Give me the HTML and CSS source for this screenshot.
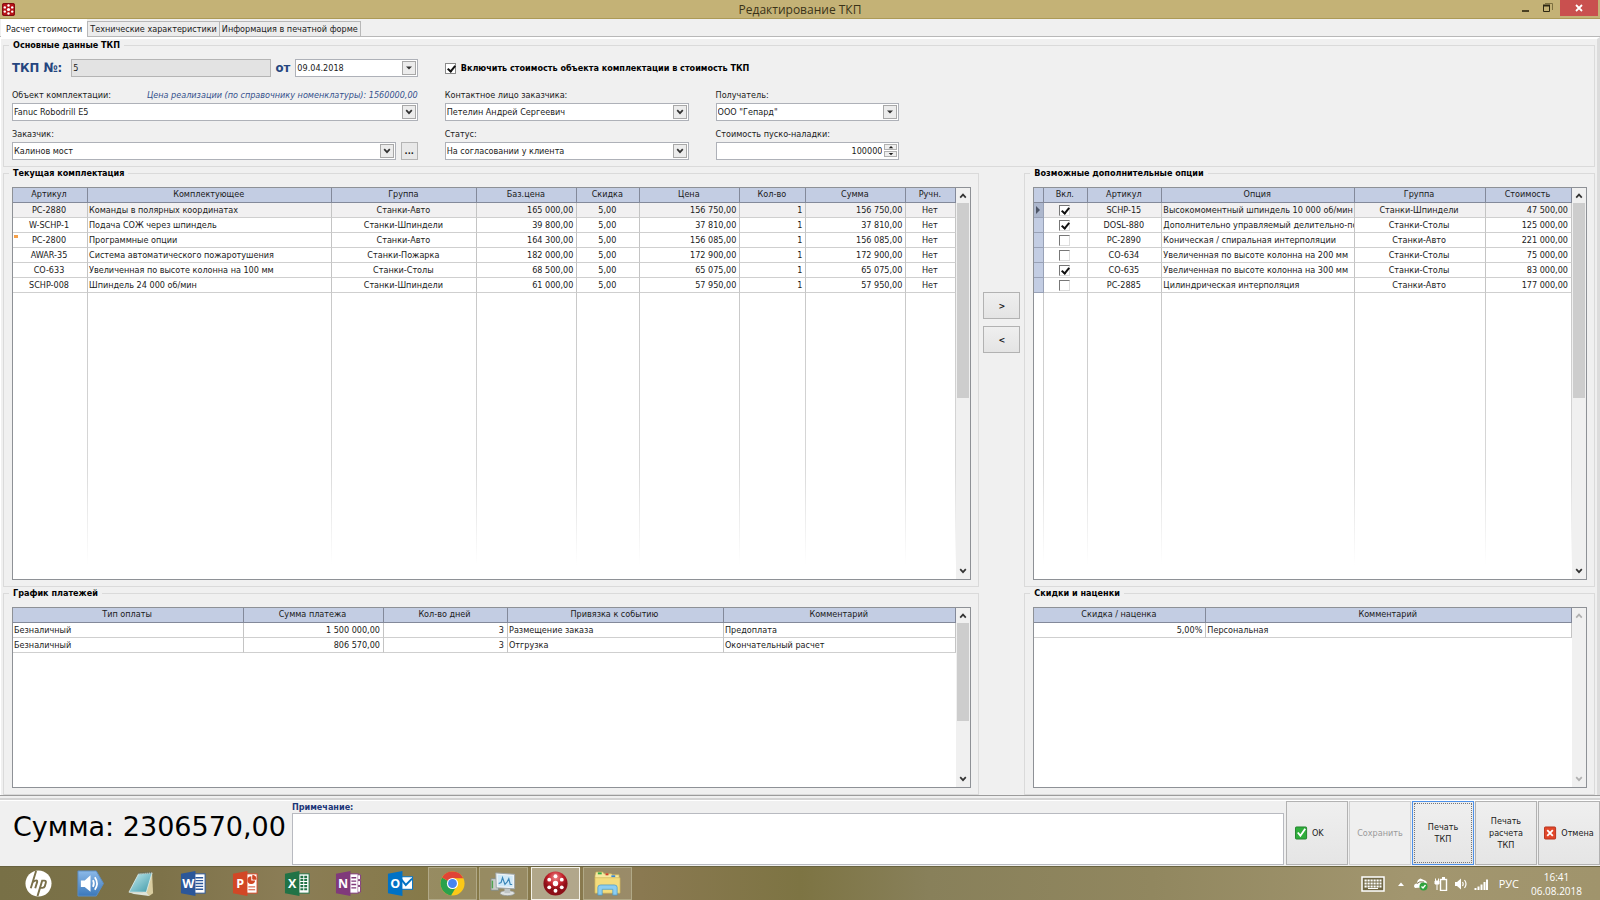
FILE: index.html
```html
<!DOCTYPE html>
<html lang="ru">
<head>
<meta charset="utf-8">
<title>Редактирование ТКП</title>
<link rel="stylesheet" href="styles.css">
</head>
<body>
<svg class="defs" aria-hidden="true">
  <symbol id="chev-down" viewBox="0 0 8 8"><path d="M1.2 2.2 4 5.2 6.800 2.200" fill="none" stroke="currentColor" stroke-width="1.700"/></symbol>
  <symbol id="chev-up" viewBox="0 0 8 8"><path d="M1.200 5.600 4 2.600 6.800 5.600" fill="none" stroke="currentColor" stroke-width="1.700"/></symbol>
  <symbol id="tri-down" viewBox="0 0 8 8"><path d="M1 2.500H7L4 5.500Z" fill="currentColor"/></symbol>
  <symbol id="tri-up" viewBox="0 0 8 8"><path d="M1 5.500H7L4 2.500Z" fill="currentColor"/></symbol>
</svg>

<header class="titlebar">
  <svg class="app-icon" viewBox="0 0 13 13"><rect width="13" height="13" rx="2" fill="#b81419"/><rect x=".5" y=".5" width="12" height="12" rx="2" fill="none" stroke="#7c0c10"/><g fill="#fff"><circle cx="6.500" cy="6.500" r="1.600"/><circle cx="6.500" cy="2.500" r="1.200"/><circle cx="6.500" cy="10.500" r="1.200"/><circle cx="2.800" cy="4.400" r="1.200"/><circle cx="10.200" cy="4.400" r="1.200"/><circle cx="2.800" cy="8.600" r="1.200"/><circle cx="10.200" cy="8.600" r="1.200"/></g></svg>
  <h1 class="window-title">Редактирование ТКП</h1>
  <div class="window-buttons">
    <button class="wbtn" aria-label="Свернуть"><svg width="8" height="10" viewBox="0 0 8 10"><path d="M0 8H7" stroke="#4a4022" stroke-width="2"/></svg></button>
    <button class="wbtn" aria-label="Развернуть"><svg width="10" height="10" viewBox="0 0 10 10"><path d="M2 .500H9.500V7" fill="none" stroke="#7d7040"/><path d="M.500 2.500H6.500V8.500H.500Z" fill="none" stroke="#2e2814"/><path d="M0 2.500H7" stroke="#2e2814" stroke-width="2"/></svg></button>
    <button class="wbtn wbtn-close" aria-label="Закрыть"><svg width="8" height="8" viewBox="0 0 8 8"><path d="M1 1 7 7M7 1 1 7" stroke="#fff" stroke-width="1.800"/></svg></button>
  </div>
</header>

<nav class="tabs" role="tablist">
  <button class="tab tab-active" role="tab" aria-selected="true">Расчет стоимости</button>
  <button class="tab" role="tab">Технические характеристики</button>
  <button class="tab" role="tab">Информация в печатной форме</button>
</nav>

<main class="page">
  <fieldset class="group">
    <legend>Основные данные ТКП</legend>
    <div class="form">
      <div class="doc-line">
        <label class="big-label" for="num">ТКП №:</label>
        <input class="field readonly" id="num" type="text" value="5" readonly>
        <label class="big-label" for="date">от</label>
        <div class="combo date">
          <input class="field" id="date" type="text" value="09.04.2018">
          <button class="drop" aria-label="Календарь"><svg><use href="#tri-down"/></svg></button>
        </div>
      </div>
      <div class="include">
        <input class="check" id="inc" type="checkbox" checked>
        <label for="inc">Включить стоимость объекта комплектации в стоимость ТКП</label>
      </div>
      <div class="cell start">
        <div class="label-line"><label for="obj">Объект комплектации:</label><span class="hint">Цена реализации (по справочнику номенклатуры): 1560000,00</span></div>
        <div class="combo"><select class="field" id="obj"><option>Fanuc Robodrill E5</option></select><span class="drop"><svg><use href="#chev-down"/></svg></span></div>
      </div>
      <div class="cell">
        <label for="contact">Контактное лицо заказчика:</label>
        <div class="combo"><select class="field" id="contact"><option>Петелин Андрей Сергеевич</option></select><span class="drop"><svg><use href="#chev-down"/></svg></span></div>
      </div>
      <div class="cell">
        <label for="rcpt">Получатель:</label>
        <div class="combo"><select class="field" id="rcpt"><option>ООО "Гепард"</option></select><span class="drop"><svg><use href="#tri-down"/></svg></span></div>
      </div>
      <div class="cell start">
        <label for="cust">Заказчик:</label>
        <div class="with-button">
          <div class="combo"><select class="field" id="cust"><option>Калинов мост</option></select><span class="drop"><svg><use href="#chev-down"/></svg></span></div>
          <button class="more">...</button>
        </div>
      </div>
      <div class="cell">
        <label for="status">Статус:</label>
        <div class="combo"><select class="field" id="status"><option>На согласовании у клиента</option></select><span class="drop"><svg><use href="#chev-down"/></svg></span></div>
      </div>
      <div class="cell">
        <label for="cost">Стоимость пуско-наладки:</label>
        <div class="combo">
          <input class="field numeric" id="cost" type="text" value="100000">
          <span class="spin"><button aria-label="Больше"><svg><use href="#tri-up"/></svg></button><button aria-label="Меньше"><svg><use href="#tri-down"/></svg></button></span>
        </div>
      </div>
    </div>
  </fieldset>

  <div class="row row-main">
    <fieldset class="group">
      <legend>Текущая комплектация</legend>
      <div class="grid">
        <table class="table lined">
          <colgroup><col class="w75"><col><col class="w145"><col class="w100"><col class="w63"><col class="w100"><col class="w66"><col class="w100"><col class="w50"></colgroup>
          <thead><tr><th>Артикул</th><th>Комплектующее</th><th>Группа</th><th>Баз.цена</th><th>Скидка</th><th>Цена</th><th>Кол-во</th><th>Сумма</th><th>Ручн.</th></tr></thead>
          <tbody>
            <tr class="current"><td class="c">PC-2880</td><td>Команды в полярных координатах</td><td class="c">Станки-Авто</td><td class="r">165 000,00</td><td class="c">5,00</td><td class="r">156 750,00</td><td class="r">1</td><td class="r">156 750,00</td><td class="c">Нет</td></tr>
            <tr><td class="c">W-SCHP-1</td><td>Подача СОЖ через шпиндель</td><td class="c">Станки-Шпиндели</td><td class="r">39 800,00</td><td class="c">5,00</td><td class="r">37 810,00</td><td class="r">1</td><td class="r">37 810,00</td><td class="c">Нет</td></tr>
            <tr><td class="c marked">PC-2800</td><td>Программные опции</td><td class="c">Станки-Авто</td><td class="r">164 300,00</td><td class="c">5,00</td><td class="r">156 085,00</td><td class="r">1</td><td class="r">156 085,00</td><td class="c">Нет</td></tr>
            <tr><td class="c">AWAR-35</td><td>Система автоматического пожаротушения</td><td class="c">Станки-Пожарка</td><td class="r">182 000,00</td><td class="c">5,00</td><td class="r">172 900,00</td><td class="r">1</td><td class="r">172 900,00</td><td class="c">Нет</td></tr>
            <tr><td class="c">CO-633</td><td>Увеличенная по высоте колонна на 100 мм</td><td class="c">Станки-Столы</td><td class="r">68 500,00</td><td class="c">5,00</td><td class="r">65 075,00</td><td class="r">1</td><td class="r">65 075,00</td><td class="c">Нет</td></tr>
            <tr><td class="c">SCHP-008</td><td>Шпиндель 24 000 об/мин</td><td class="c">Станки-Шпиндели</td><td class="r">61 000,00</td><td class="c">5,00</td><td class="r">57 950,00</td><td class="r">1</td><td class="r">57 950,00</td><td class="c">Нет</td></tr>
            <tr class="filler"><td></td><td></td><td></td><td></td><td></td><td></td><td></td><td></td><td></td></tr>
          </tbody>
        </table>
        <div class="scroll"><svg><use href="#chev-up"/></svg><div class="track"><div class="thumb"></div></div><svg><use href="#chev-down"/></svg></div>
      </div>
    </fieldset>
    <div class="movers"><button>&gt;</button><button>&lt;</button></div>
    <fieldset class="group">
      <legend>Возможные дополнительные опции</legend>
      <div class="grid">
        <table class="table lined">
          <colgroup><col class="w10"><col class="w44"><col class="w74"><col><col class="w131"><col class="w86"></colgroup>
          <thead><tr><th></th><th>Вкл.</th><th>Артикул</th><th>Опция</th><th>Группа</th><th>Стоимость</th></tr></thead>
          <tbody>
            <tr class="current"><td class="ind"><svg viewBox="0 0 6 8"><path d="M1 0 5 4 1 8Z" fill="#4d5566"/></svg></td><td class="c"><input class="check sunk" type="checkbox" checked aria-label="SCHP-15"></td><td class="c">SCHP-15</td><td>Высокомоментный шпиндель 10 000 об/мин</td><td class="c">Станки-Шпиндели</td><td class="r">47 500,00</td></tr>
            <tr><td class="ind"></td><td class="c"><input class="check sunk" type="checkbox" checked aria-label="DOSL-880"></td><td class="c">DOSL-880</td><td>Дополнительно управляемый делительно-поворотный стол</td><td class="c">Станки-Столы</td><td class="r">125 000,00</td></tr>
            <tr><td class="ind"></td><td class="c"><input class="check sunk" type="checkbox" aria-label="PC-2890"></td><td class="c">PC-2890</td><td>Коническая / спиральная интерполяции</td><td class="c">Станки-Авто</td><td class="r">221 000,00</td></tr>
            <tr><td class="ind"></td><td class="c"><input class="check sunk" type="checkbox" aria-label="CO-634"></td><td class="c">CO-634</td><td>Увеличенная по высоте колонна на 200 мм</td><td class="c">Станки-Столы</td><td class="r">75 000,00</td></tr>
            <tr><td class="ind"></td><td class="c"><input class="check sunk" type="checkbox" checked aria-label="CO-635"></td><td class="c">CO-635</td><td>Увеличенная по высоте колонна на 300 мм</td><td class="c">Станки-Столы</td><td class="r">83 000,00</td></tr>
            <tr><td class="ind"></td><td class="c"><input class="check sunk" type="checkbox" aria-label="PC-2885"></td><td class="c">PC-2885</td><td>Цилиндрическая интерполяция</td><td class="c">Станки-Авто</td><td class="r">177 000,00</td></tr>
            <tr class="filler"><td></td><td></td><td></td><td></td><td></td><td></td></tr>
          </tbody>
        </table>
        <div class="scroll"><svg><use href="#chev-up"/></svg><div class="track"><div class="thumb"></div></div><svg><use href="#chev-down"/></svg></div>
      </div>
    </fieldset>
  </div>

  <div class="row row-bottom">
    <fieldset class="group">
      <legend>График платежей</legend>
      <div class="grid">
        <table class="table">
          <colgroup><col class="w231"><col class="w140"><col class="w124"><col class="w216"><col></colgroup>
          <thead><tr><th>Тип оплаты</th><th>Сумма платежа</th><th>Кол-во дней</th><th>Привязка к событию</th><th>Комментарий</th></tr></thead>
          <tbody>
            <tr><td>Безналичный</td><td class="r">1 500 000,00</td><td class="r">3</td><td>Размещение заказа</td><td>Предоплата</td></tr>
            <tr><td>Безналичный</td><td class="r">806 570,00</td><td class="r">3</td><td>Отгрузка</td><td>Окончательный расчет</td></tr>
            <tr class="filler"><td colspan="5"></td></tr>
          </tbody>
        </table>
        <div class="scroll"><svg><use href="#chev-up"/></svg><div class="track"><div class="thumb thumb-long"></div></div><svg><use href="#chev-down"/></svg></div>
      </div>
    </fieldset>
    <div class="movers"></div>
    <fieldset class="group">
      <legend>Скидки и наценки</legend>
      <div class="grid">
        <table class="table">
          <colgroup><col class="w172"><col></colgroup>
          <thead><tr><th>Скидка / наценка</th><th>Комментарий</th></tr></thead>
          <tbody>
            <tr><td class="r">5,00%</td><td>Персональная</td></tr>
            <tr class="filler"><td colspan="2"></td></tr>
          </tbody>
        </table>
        <div class="scroll scroll-off"><svg><use href="#chev-up"/></svg><div class="track"></div><svg><use href="#chev-down"/></svg></div>
      </div>
    </fieldset>
  </div>
</main>

<section class="bottom">
  <div class="total">Сумма: 2306570,00</div>
  <div class="note">
    <label for="note">Примечание:</label>
    <textarea id="note"></textarea>
  </div>
  <div class="actions">
    <button class="action"><svg viewBox="0 0 14 14"><rect x=".5" y=".5" width="12" height="13" rx="1" fill="#2fae3c" stroke="#1f7f2a"/><path d="M3 6.500 5.800 10 11 2.500" fill="none" stroke="#fff" stroke-width="2"/></svg>OK</button>
    <button class="action" disabled>Сохранить</button>
    <button class="action focused">Печать<br>ТКП</button>
    <button class="action">Печать<br>расчета<br>ТКП</button>
    <button class="action"><svg viewBox="0 0 14 14"><rect x=".5" y=".5" width="12" height="13" rx="1" fill="#e2472a" stroke="#b3301a"/><path d="M3.500 4 9.500 10M9.500 4 3.500 10" stroke="#fff" stroke-width="2"/></svg>Отмена</button>
  </div>
</section>

<footer class="taskbar">
  <div class="apps">
    <button class="app" aria-label="HP"><svg viewBox="0 0 28 28"><circle cx="14" cy="14" r="13.500" fill="#fff"/><g fill="none" stroke="#7a704a" stroke-width="2"><path d="M11.500 1 6 19M8.300 12.500Q13 9 12.600 12.500L10.600 19"/><path d="M13 27 17.800 11H20Q22.300 11 21.500 13.500L20.500 17Q20 18.500 18 18.500H16"/></g></svg></button>
    <button class="app" aria-label="Звук"><svg viewBox="0 0 28 28"><defs><linearGradient id="g1" x2="0" y2="1"><stop stop-color="#8bb9e8"/><stop offset="1" stop-color="#3b78bb"/></linearGradient></defs><path d="M1 1H20L27.500 14 20 27H1Z" fill="url(#g1)" stroke="#5a8dc4"/><path d="M4 11H8L14 5.500V22.500L8 17.500H4Z" fill="#fff"/><path d="M16.500 10.500Q18.500 14 16.500 17.500M18.500 7.500Q23 14 18.500 20.500" fill="none" stroke="#fff" stroke-width="1.800"/></svg></button>
    <button class="app" aria-label="Блокнот"><svg viewBox="0 0 28 28"><defs><linearGradient id="g2" x2="1" y2="1"><stop stop-color="#c9eef0"/><stop offset="1" stop-color="#3d98a8"/></linearGradient></defs><path d="M25 3 26 24 22 27 15 24Z" fill="#d9cda0"/><path d="M11 4 25 3 19 23 1 23Z" fill="url(#g2)" stroke="#e4f1f0" stroke-width=".8"/><path d="M1 23 19 23 22 27 6 25Z" fill="#dfe5dc"/><path d="M11 3.500 25 2.500" stroke="#606b5e" stroke-width="2" stroke-dasharray="1 1"/></svg></button>
    <button class="app" aria-label="Word"><svg viewBox="0 0 28 28"><rect x="14" y="4" width="12" height="20" fill="#fff" stroke="#2b579a"/><path d="M16 8H24M16 11H24M16 14H24M16 17H24M16 20H24" stroke="#2b579a" stroke-width="1.500"/><path d="M1 4 16 1V27L1 24Z" fill="#2b579a"/><text x="8.500" y="18.500" text-anchor="middle" class="letter">W</text></svg></button>
    <button class="app" aria-label="PowerPoint"><svg viewBox="0 0 28 28"><rect x="14" y="4" width="12" height="20" fill="#fff" stroke="#d24726"/><path d="M20 6.500A4 4 0 1 0 24 11H20Z" fill="#d24726"/><path d="M21.500 5.500V9.500H25A4 4 0 0 0 21.500 5.500ZM17 17.500H24M17 20.500H24" fill="#d24726" stroke="#d24726"/><path d="M1 4 16 1V27L1 24Z" fill="#d24726"/><text x="8.500" y="18.500" text-anchor="middle" class="letter">P</text></svg></button>
    <button class="app" aria-label="Excel"><svg viewBox="0 0 28 28"><rect x="14" y="4" width="12" height="20" fill="#fff" stroke="#217346"/><path d="M18.500 6V22M22.500 6V22" stroke="#217346" stroke-width="3" stroke-dasharray="2.200 1"/><path d="M1 4 16 1V27L1 24Z" fill="#217346"/><text x="8.500" y="18.500" text-anchor="middle" class="letter">X</text></svg></button>
    <button class="app" aria-label="OneNote"><svg viewBox="0 0 28 28"><rect x="14" y="4" width="10" height="20" fill="#fff" stroke="#80397b"/><path d="M24 5H26.500V10H24M24 11H26.500V16H24M24 17H26.500V23H24" fill="#fff" stroke="#80397b"/><path d="M17 8H22M17 11.500H22M17 15H22M17 18.500H22" stroke="#80397b" stroke-width="1.400"/><path d="M1 4 16 1V27L1 24Z" fill="#80397b"/><text x="8.500" y="18.500" text-anchor="middle" class="letter">N</text></svg></button>
    <button class="app" aria-label="Outlook"><svg viewBox="0 0 28 28"><rect x="14" y="7" width="12.500" height="13" fill="#fff" stroke="#0072c6"/><path d="M15 10 19.500 15.500 26 9" fill="none" stroke="#0072c6" stroke-width="2"/><path d="M1 4 16 1V27L1 24Z" fill="#0072c6"/><text x="8.500" y="18.500" text-anchor="middle" class="letter">O</text></svg></button>
    <button class="app app-open" aria-label="Chrome"><svg viewBox="0 0 28 28"><circle cx="14" cy="14" r="12.500" fill="#fbc918"/><path d="M14 14 3.200 7.700A12.500 12.500 0 0 0 12.500 26.400L19 15.500Z" fill="#2aa14c"/><path d="M14 14 3.200 7.700A12.500 12.500 0 0 1 25.200 8.500H14Z" fill="#e04436"/><circle cx="14" cy="14" r="5.800" fill="#fff"/><circle cx="14" cy="14" r="4.600" fill="#4684ee"/></svg></button>
    <button class="app app-open" aria-label="Монитор"><svg viewBox="0 0 28 28"><path d="M1 9H9V21H1Z" fill="#c9cdc9" stroke="#828a84"/><path d="M2.500 11V19" stroke="#4fa44f" stroke-width="1.500"/><ellipse cx="18" cy="24" rx="7.500" ry="2.600" fill="#dfe1e0" stroke="#8b908e" stroke-width=".7"/><path d="M15 19H21V24H15Z" fill="#bfc4c4"/><path d="M6 3 25.500 4.500V19.500L6.500 18.500Z" fill="#eef3f6" stroke="#9aa3a6"/><path d="M8 5 23.500 6.300V17.500L8.500 16.700Z" fill="#cfe9f8"/><path d="M9 14 11.500 13 13 8 15.500 15 18 12 19.500 9 21 15H23" fill="none" stroke="#3a86b8" stroke-width="1.200"/></svg></button>
    <button class="app app-active" aria-label="ТКП"><svg viewBox="0 0 28 28"><defs><radialGradient id="g3" cy=".25"><stop stop-color="#f09090"/><stop offset=".6" stop-color="#c4222c"/><stop offset="1" stop-color="#8c1018"/></radialGradient></defs><circle cx="14" cy="14" r="12.500" fill="url(#g3)"/><g fill="#fff"><circle cx="14" cy="14" r="2.800"/><circle cx="14" cy="6.500" r="2"/><circle cx="14" cy="21.500" r="2"/><circle cx="7.500" cy="10" r="2"/><circle cx="20.500" cy="10" r="2"/><circle cx="7.500" cy="18" r="2"/><circle cx="20.500" cy="18" r="2"/></g></svg></button>
    <button class="app app-open" aria-label="Проводник"><svg viewBox="0 0 28 28"><path d="M1 6 2 2H9L10.500 4H18L19 5H26V9H1Z" fill="#f6e9a0" stroke="#c8ae55" stroke-width=".7"/><path d="M4 3.500H8" stroke="#35a944" stroke-width="2"/><path d="M12 4.500H15" stroke="#d23b2c" stroke-width="2"/><path d="M18 6.500H22" stroke="#3b86d2" stroke-width="2"/><path d="M1 8H27V24H1Z" fill="#f4dc7c" stroke="#cfb45a" stroke-width=".7"/><path d="M4 26V18Q4 15.500 7 15.500H21Q24 15.500 24 18V26H19.500V20H8.500V26Z" fill="#8ccdf0" stroke="#4d9cc8" stroke-width=".8"/></svg></button>
  </div>
  <div class="tray">
    <svg width="24" height="16" viewBox="0 0 24 16"><rect x="1" y="1" width="22" height="14" fill="#716845" stroke="#fff" stroke-width="1.500"/><path d="M3.500 4.500H20.500M3.500 7.500H20.500M3.500 10.500H20.500" stroke="#fff" stroke-width="2.200" stroke-dasharray="2.200 .8"/><path d="M7 12.500H17" stroke="#fff"/></svg>
    <svg class="tray-up" width="8" height="6" viewBox="0 0 8 6"><path d="M1 5 4 1.500 7 5Z" fill="#fff"/></svg>
    <svg width="14" height="14" viewBox="0 0 14 14"><path d="M0 9.500Q0 6.500 3 6.500 3 2.500 6.500 1.500L12 4 13 6 7 10.500 1 11Z" fill="#fff"/><path d="M3 6.500Q5 4 10 5" fill="none" stroke="#7d7450"/><circle cx="9.500" cy="9.500" r="4" fill="#2fa33d"/><path d="M7.500 9.500 9 11 11.500 8" fill="none" stroke="#fff" stroke-width="1.300"/></svg>
    <svg width="14" height="14" viewBox="0 0 14 14"><rect x="6.500" y="2.500" width="6" height="11" fill="#a49a75" stroke="#fff" stroke-width="1.400"/><path d="M8 1H11" stroke="#fff" stroke-width="2"/><path d="M1 4H5V7H1ZM1.500 1.500V4M4.500 1.500V4M3 7V13" fill="#fff" stroke="#fff"/></svg>
    <svg width="14" height="14" viewBox="0 0 14 14"><path d="M1 5H3L7 1.500V12.500L3 9H1Z" fill="#fff"/><path d="M8.500 5Q9.800 7 8.500 9M10.500 3Q13.500 7 10.500 11" fill="none" stroke="#fff" stroke-width="1.200"/></svg>
    <svg width="14" height="14" viewBox="0 0 14 14"><path d="M1.500 13V11M4.500 13V9.500M7.500 13V7.500M10.500 13V5M13 13V2.500" stroke="#fff" stroke-width="2"/></svg>
    <span class="lang">РУС</span>
    <div class="clock">16:41<br>06.08.2018</div>
  </div>
</footer>
</body>
</html>
```
FILE: styles.css
```css
* { box-sizing: border-box; }

body {
  margin: 0;
  height: 100vh;
  display: flex;
  flex-direction: column;
  overflow: hidden;
  background: #f0f0f0;
  color: #1a1a1a;
  font: 9px/12px "DejaVu Sans Condensed", Tahoma, sans-serif;
}

button, input, select, textarea {
  margin: 0;
  padding: 0;
  border: 0;
  border-radius: 0;
  background: none;
  color: inherit;
  font: inherit;
}

.defs { display: none; }

/* Window title */
.titlebar {
  display: grid;
  grid-template-columns: 1fr auto 1fr;
  align-items: start;
  height: 19px;
  background: #c4b276;
  border-bottom: 1px solid #ac9a57;
}
.app-icon { width: 13px; height: 13px; margin: 3px 0 0 2px; }
.window-title {
  margin: 0;
  font: 12px/19px "Open Sans", "Noto Sans", sans-serif;
  color: #3a3218;
}
.window-buttons { display: flex; justify-content: flex-end; padding-right: 2px; }
.wbtn { width: 22px; height: 16px; display: flex; align-items: center; justify-content: center; }
.wbtn-close { width: 38px; margin-left: 1px; background: #c9504f; }

/* Tabs */
.tabs {
  display: flex;
  align-items: flex-end;
  height: 18px;
  padding-left: 1px;
  border-bottom: 1px solid #b8b8b8;
}
.tab {
  height: 15px;
  padding: 0 2px;
  border: 1px solid #b8b8b8;
  border-bottom: 0;
  background: #ececec;
}
.tab + .tab + .tab { border-left: 0; }
.tab-active {
  height: 18px;
  margin-bottom: -1px;
  padding: 0 4px;
  border-color: #fff;
  background: #fff;
}

/* Page and group boxes */
.page {
  flex: 1;
  min-height: 0;
  display: flex;
  flex-direction: column;
  padding: 0 2px 0 2px;
  border: solid #fff;
  border-width: 2px 0 0 1px;
  border-right: 3px solid #dcdcdc;
}
.group {
  min-width: 0;
  min-height: 0;
  margin: 0;
  padding: 8px 7px 6px 8px;
  border: 1px solid #dadada;
}
legend {
  margin-left: -3px;
  padding: 0 4px;
  height: 12px;
  font-weight: bold;
  color: #000;
}
.form {
  display: grid;
  grid-template-columns: 406fr 244fr 184fr 661fr;
  column-gap: 27px;
  row-gap: 7px;
}
.doc-line, .include { display: flex; align-items: center; margin-bottom: 5px; }
.include { grid-column: 2 / -1; gap: 5px; font-weight: bold; color: #000; }
.doc-line { gap: 5px; }
.doc-line .readonly { flex: 198; min-width: 0; margin-left: 4px; }
.doc-line .date { flex: 124; min-width: 0; }
.big-label { font: 13px/18px "DejaVu Sans Condensed", sans-serif; font-weight: bold; color: #26467f; }
.cell { display: flex; flex-direction: column; gap: 2px; min-width: 0; }
.start { grid-column: 1; }
.label-line { display: flex; justify-content: space-between; white-space: nowrap; }
.hint { font-style: italic; color: #34508c; }
.with-button { display: flex; gap: 5px; }
.more { width: 17px; height: 18px; border: 1px solid #b4b4b4; background: #e8e8e8; font-weight: bold; }

.field {
  width: 100%;
  height: 18px;
  padding: 0 1px;
  border: 1px solid #aeb1b8;
  background: #fff;
  appearance: none;
}
.readonly { background: #e3e3e3; border-color: #b4b4b4; }
.numeric { padding-right: 16px; text-align: right; }
.combo { position: relative; flex: 1 0 auto; }
.drop {
  position: absolute;
  top: 2px;
  right: 2px;
  width: 14px;
  height: 14px;
  display: flex;
  align-items: center;
  justify-content: center;
  border: 1px solid #a8a8a8;
  background: #ececec;
  pointer-events: none;
}
.drop svg, .scroll svg { width: 8px; height: 8px; color: #333; }
.spin { position: absolute; top: 2px; right: 2px; width: 13px; display: grid; gap: 1px; }
.spin button { height: 6px; display: flex; align-items: center; justify-content: center; border: 1px solid #b0b0b0; background: #eee; }
.spin svg { width: 6px; height: 6px; flex: none; }

.check {
  position: relative;
  flex: none;
  width: 11px;
  height: 11px;
  border: 1px solid #8a8a8a;
  background: #fff;
  appearance: none;
}
.check:checked::after {
  content: "";
  position: absolute;
  left: 3px;
  top: 0;
  width: 3px;
  height: 6px;
  border: solid #111;
  border-width: 0 2px 2px 0;
  transform: rotate(40deg);
}
.sunk { display: block; margin: 0 auto; border-color: #777 #ddd #ddd #777; }

/* Data grids */
.row { display: grid; grid-template-columns: 977fr 45px 571fr; min-height: 0; }
.row-main { flex: 420; }
.row-bottom { flex: 208; }
.row .group { display: flex; }
.grid {
  flex: 1;
  min-width: 0;
  display: flex;
  border: 1px solid #8e9196;
  background: #fff;
}
.table {
  flex: 1;
  width: 100%;
  min-width: 0;
  height: 100%;
  table-layout: fixed;
  border-collapse: separate;
  border-spacing: 0;
}
.table th, .table td {
  height: 15px;
  padding: 0 3px 0 1px;
  overflow: hidden;
  white-space: nowrap;
  text-overflow: clip;
  line-height: 12px;
  border-right: 1px solid #c4c4c4;
  border-bottom: 1px solid #cfcfcf;
  text-align: left;
}
.table th {
  padding-bottom: 2px;
  background: #c3cde3;
  border-color: #83899a;
  font-weight: normal;
  text-align: center;
}
.table .c { text-align: center; }
.table .r { text-align: right; }
.current td { background: #f1f0f1; }
.table .ind { padding: 0 1px; background: #c3cde3; border-color: #98a1b6; }
.current .ind { background: #adb7cd; }
.ind svg { display: block; width: 6px; height: 8px; }
.marked { background: linear-gradient(#f5a04a, #f5a04a) 1px 2px / 4px 3px no-repeat; }
.table .filler td { height: auto; border: 0; }
.lined .filler td { background: linear-gradient(#c8c8c8, #d8d8d8 60%, #fff 95%) right / 1px 100% no-repeat; }
.w10 { width: 10px; } .w44 { width: 44px; } .w50 { width: 50px; } .w63 { width: 63px; }
.w66 { width: 66px; } .w74 { width: 74px; } .w75 { width: 75px; } .w86 { width: 86px; }
.w100 { width: 100px; } .w124 { width: 124px; } .w131 { width: 131px; } .w140 { width: 140px; }
.w145 { width: 145px; } .w172 { width: 172px; } .w216 { width: 216px; } .w231 { width: 231px; }

.scroll {
  flex: none;
  width: 14px;
  display: flex;
  flex-direction: column;
  align-items: center;
  padding: 4px 0;
  gap: 3px;
  background: #f0f0f0;
}
.track { flex: 1; width: 12px; }
.thumb { height: 54%; background: #cdcdcd; }
.thumb-long { height: 66%; }
.scroll-off svg { color: #b0b0b0; }

.movers { display: flex; flex-direction: column; align-items: center; gap: 7px; padding-top: 125px; }
.movers button {
  width: 37px;
  height: 27px;
  border: 1px solid #b2b2b2;
  background: linear-gradient(#efefef, #e4e4e4);
  font-weight: bold;
}

/* Total, note and actions */
.bottom {
  display: flex;
  height: 71px;
  padding: 5px 0 1px 13px;
  border-top: 1px solid #9c9c9c;
  box-shadow: inset 0 2px #f0f0f0, inset 0 4px #d4d4d4, inset 0 5px #fff;
}
.total {
  padding-top: 9px;
  margin-right: 6px;
  font: 27px/34px "DejaVu Sans", sans-serif;
  color: #000;
  white-space: nowrap;
}
.note { flex: 1; min-width: 0; display: flex; flex-direction: column; }
.note label { color: #1c3678; font-weight: bold; }
.note textarea { flex: 1; width: 100%; border: 1px solid #b8bac0; background: #fff; resize: none; }
.actions { display: flex; gap: 1px; padding-left: 2px; }
.action {
  width: 62px;
  display: flex;
  align-items: center;
  justify-content: center;
  gap: 4px;
  border: 1px solid #b2b2b2;
  background: linear-gradient(#efefef, #e5e5e5);
}
.action:first-child { justify-content: flex-start; padding-left: 8px; }
.action svg { width: 13px; height: 14px; }
.action:disabled { color: #9a9a9a; border-color: #cfcfcf; background: #efefef; }
.focused { border: 1px solid #4d90e8; outline: 1px dotted #777; outline-offset: -3px; }

/* Taskbar */
.taskbar {
  display: flex;
  justify-content: space-between;
  height: 34px;
  border-top: 1px solid #68623f;
  background: linear-gradient(90deg, #787046, #7d7249 10%, #8b7d56 18%, #857947 28%, #8a7951 40%, #7d7443 50%, #88805a 58%, #91875f 72%, #a2966f 88%, #a0946c);
}
.apps { display: flex; justify-content: space-between; width: 618px; margin-left: 14px; }
.app {
  width: 49px;
  display: flex;
  align-items: center;
  justify-content: center;
  border: 1px solid transparent;
}
.app svg { width: 27px; height: 27px; }
.app-open { border-color: #b1a987; background: rgba(255, 255, 255, 0.14); }
.app-active { border-color: #f3f1e8; background: rgba(255, 255, 255, 0.35); }
.letter { font: bold 13px "Open Sans", sans-serif; fill: #fff; }
.tray { display: flex; align-items: center; gap: 6px; padding-right: 18px; color: #fff; }
.tray-up { margin: 0 3px 0 6px; }
.lang { margin: 0 6px 0 5px; font: 11px/16px "Open Sans", sans-serif; }
.clock { font: 10px/14px "Open Sans", sans-serif; text-align: center; }
```
